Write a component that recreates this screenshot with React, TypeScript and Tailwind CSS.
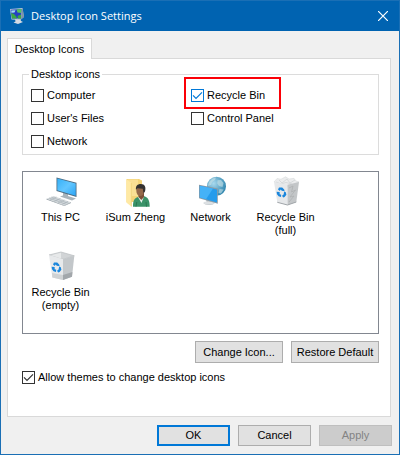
import type { ReactNode } from "react";
import clsx from "clsx";

type CheckProps = {
  label: string;
  checked?: boolean;
  hot?: boolean; // hovered look, blue outline and tick
};

function Check({ label, checked, hot }: CheckProps) {
  return (
    <label className="flex h-[13px] items-center gap-[3px] whitespace-nowrap">
      <span className={clsx("grid size-[13px] shrink-0", hot ? "text-[#0078d7]" : "text-[#333333]")}>
        <input
          type="checkbox"
          defaultChecked={checked}
          className="peer col-start-1 row-start-1 size-[13px] appearance-none border border-current bg-white"
        />
        <svg
          viewBox="0 0 13 13"
          className="pointer-events-none invisible col-start-1 row-start-1 size-[13px] peer-checked:visible"
          fill="none"
          stroke="currentColor"
          strokeWidth="1.2"
        >
          <path d="M2 6.3 L5 9.3 L11 3.3" />
        </svg>
      </span>
      {label}
    </label>
  );
}

function RecycleMark() {
  return (
    <g fill="#1a86dc">
      <path d="M9 11.6 L12.2 11.4 L14.2 13.6 L14.6 15.2 L11.8 14.8 L10.6 13.6 L9.8 15 L8 13.6Z" />
      <path d="M14.2 15.6 L15.8 16.2 L16.4 18.8 L14.6 21 L13.2 21.6 L12 19.8 L13.6 18.4Z" />
      <path d="M6.6 15.8 L9.4 16 L10 17.2 L9.2 18 L11.2 18.8 L11 21 L8.6 20.2 L7 18.2Z" />
    </g>
  );
}

function ThisPcIcon() {
  return (
    <svg viewBox="0 0 32 32" className="size-8">
      <defs>
        <linearGradient id="pc" x1="0" y1="0" x2="1" y2="1">
          <stop offset="0" stopColor="#35b0f7" />
          <stop offset=".5" stopColor="#62c6ff" />
          <stop offset="1" stopColor="#2ba4f4" />
        </linearGradient>
      </defs>
      <path d="M18 16 L23 17.5 L23 20 L31 22.5 L27 24.5 L15 20.5 L18 19.5Z" fill="#a9b4bb" />
      <path d="M11.5 1.5 L31.5 6.8 V21 L11.5 15Z" fill="#4c6a80" />
      <path d="M12.3 2.5 L30.7 7.4 V19.8 L12.3 14.3Z" fill="url(#pc)" />
      <path d="M1.5 22.7 L8.7 20 L26 26.3 L19.3 29.4Z" fill="#d5dadd" />
      <path d="M1.5 22.7 L19.3 29.4 L26 26.3 V27 L19.3 30 L1.5 23.5Z" fill="#8d989f" />
      <path d="M4 22 L21.5 28.4 M6.3 21.1 L23.7 27.4 M5 24 L11.5 21 M9 25.5 L15.5 22.5 M13 27 L19.5 24 M17 28.4 L23 25.4" stroke="#a5afb5" strokeWidth=".6" />
    </svg>
  );
}

function UserIcon() {
  return (
    <svg viewBox="0 0 32 32" className="size-8">
      <path d="M6.5 3 H19 L22 4.5 V26 H6.5Z" fill="#f4d478" />
      <path d="M8 3.5 H18 V20 H8Z" fill="#fae094" />
      <path d="M6.3 3 L11.7 7.3 V30.7 L6.3 26.5Z" fill="#ffe9a4" />
      <path d="M11.3 7 V30.5" stroke="#e8c868" strokeWidth=".6" />
      <path d="M13 30.7 C13 24 14.5 21.8 18.5 21 L23.5 20 C28 21 29.7 24 29.7 30.7Z" fill="#3a9268" />
      <path d="M18 21 L21.5 27 L24 20.5Z" fill="#e7f0ea" />
      <path d="M18.5 17 H24 V21 L21.3 24 L18.5 21Z" fill="#7b5138" />
      <ellipse cx="20.2" cy="14.8" rx="3.9" ry="5.2" fill="#94684a" />
      <path d="M16 14 C15.4 10 17.5 8 20.8 8 C25 8 26.2 11.3 25 15.5 L23.5 17.5 L22.8 12.7 L17.3 12.2Z" fill="#343130" />
      <path d="M16 30.7 L16.8 26 M26.5 30.7 L26 26" stroke="#216c45" strokeWidth=".7" />
    </svg>
  );
}

function NetworkIcon() {
  return (
    <svg viewBox="0 0 32 32" className="size-8">
      <defs>
        <radialGradient id="globe" cx=".35" cy=".35" r=".75">
          <stop offset="0" stopColor="#a8d9ee" />
          <stop offset="1" stopColor="#277fa9" />
        </radialGradient>
      </defs>
      <circle cx="21.5" cy="10.3" r="9.5" fill="url(#globe)" />
      <path d="M14 6 L17.5 2.6 L21 1.6 L20 4 L17 6 L16 9 L13 10Z M22.5 4.2 L26 4 L28.5 7 L27.5 11 L24 10 L22.3 7.5Z M24.5 13 L28.7 13.5 L26 17.5 L23.5 17Z" fill="#c9e3e8" opacity=".6" />
      <path d="M11 23 H16 V26 L19.5 27 C19.5 29.5 9 29.5 8.5 27 L11.5 26Z" fill="#bcc4c9" />
      <ellipse cx="14" cy="27" rx="5.6" ry="1.4" fill="#dce0e3" />
      <path d="M4 8.7 L22.8 12.5 V27.8 L4 22.3Z" fill="#8d9ba5" />
      <path d="M4.8 9.8 L22 13.4 V26.4 L4.8 21.4Z" fill="#259cec" />
      <path d="M4.8 9.8 L18 12.6 L11 23.2 L4.8 21.4Z" fill="#45b2f7" />
    </svg>
  );
}

function BinFullIcon() {
  return (
    <svg viewBox="0 0 32 32" className="size-8">
      <path d="M4 6 L7 2.5 L11 3.2 L15.5 .8 L19 3 L24 2.3 L26 5 L29 6 L17 11Z" fill="#ebeced" stroke="#d3d6d8" strokeWidth=".5" />
      <path d="M9 4 L12 7 L17 3 L20 7 L25 4 M6 6 L11 8 L16 6.5 L22 8" fill="none" stroke="#cdd1d3" strokeWidth=".7" />
      <path d="M4 6 L17.5 8.8 V29 L7.3 26.3Z" fill="#e6e8ea" />
      <path d="M17.5 8.8 L29 6 L26.3 26 L17.5 29Z" fill="#c3c6c8" />
      <path d="M19 12 L23 10 L21.5 16 L25.5 14 L20 21 L24 20 L19 26" fill="none" stroke="#aeb1b3" strokeWidth=".8" />
      <path d="M7.3 26.3 L17.5 29 L26.3 26" fill="none" stroke="#a0a5a9" />
      <RecycleMark />
    </svg>
  );
}

function BinEmptyIcon() {
  return (
    <svg viewBox="0 0 32 32" className="size-8">
      <path d="M4 4 L16 1 L29.3 4.8 L18 8.3Z" fill="#d1d4d6" stroke="#b9bdc0" strokeWidth=".7" />
      <path d="M6 4.3 L16 1.8 V7.4Z" fill="#e7e9ea" />
      <path d="M4 4 L18 8.3 V29 L7.3 26.5Z" fill="#e7e9eb" />
      <path d="M18 8.3 L29.3 4.8 L27 25.7 L18 29Z" fill="#c3c7ca" />
      <path d="M7 22 L18 24 V29 L7.3 26.5Z" fill="#cfd2d4" />
      <path d="M18 24 L27.4 21 L27 25.7 L18 29Z" fill="#a2a7ab" />
      <RecycleMark />
    </svg>
  );
}

function TitleIcon() {
  return (
    <svg viewBox="0 0 16 16" className="size-4">
      <path d="M6 11 L11 10 L12 13 L14 14 L9 16 L4.5 14.5 L6.5 13.5Z" fill="#d5dbe3" />
      <path d="M1 1 L13.5 0 L15 9 L11 12 L2.5 11.5Z" fill="#bac8d8" />
      <path d="M1.8 1.8 L12.6 1 L12 10.6 L3 10.4Z" fill="#2540c4" />
      <path d="M2 5 L5 6 L7.5 9 L8 10.5 L3 10.4Z" fill="#3ba944" />
      <path d="M7.5 1.5 L12.5 1 L12.2 5 L8.5 4.5Z" fill="#56c65a" />
      <path d="M8.5 8 L12 6.5 V10.5 H9Z" fill="#3ba944" />
      <path d="M2.2 2.5 L6.5 2.2 L5.5 4.5 L2.5 4.8Z" fill="#a2d8f2" />
      <path d="M13.5 0 L15 9 L12 11.5 L12.8 1Z" fill="#7c93a8" />
    </svg>
  );
}

const icons: { name: string; note?: string; icon: ReactNode }[] = [
  { name: "This PC", icon: <ThisPcIcon /> },
  { name: "iSum Zheng", icon: <UserIcon /> },
  { name: "Network", icon: <NetworkIcon /> },
  { name: "Recycle Bin", note: "(full)", icon: <BinFullIcon /> },
  { name: "Recycle Bin", note: "(empty)", icon: <BinEmptyIcon /> },
];

export default function App() {
  return (
    <main className="flex min-h-screen flex-col border border-[#1a6fb5] bg-[#f0f0f0] font-['Liberation_Sans',sans-serif] text-[11px] leading-[13px] text-black">
      <header className="flex h-[30px] items-center bg-[#0063b1] pr-[10px] pl-2 text-white">
        <TitleIcon />
        <h1 className="ml-[6px] flex-1 font-['Open_Sans','Noto_Sans',sans-serif] text-[11px] leading-4">
          Desktop Icon Settings
        </h1>
        <button type="button" aria-label="Close" className="p-px">
          <svg viewBox="0 0 10 10" className="size-[10px]" stroke="currentColor" strokeWidth="1.2">
            <path d="M0 0 L10 10 M10 0 L0 10" />
          </svg>
        </button>
      </header>

      <div className="flex flex-1 flex-col pt-[7px] pr-[7px] pl-[6px]">
        <div role="tablist" className="flex">
          <button
            type="button"
            role="tab"
            aria-selected="true"
            className="relative z-10 -mb-px h-[21px] w-[85px] border border-b-0 border-[#d9d9d9] bg-white"
          >
            Desktop Icons
          </button>
        </div>

        <section className="mr-px flex-1 border border-[#d9d9d9] bg-white pt-[9px] pr-[11px] pl-[14px]">
          <fieldset className="border border-[#dcdcdc] pr-[27px] pb-[6px] pl-2">
            <legend className="-ml-[2px] px-[2px]">Desktop icons</legend>
            <div className="grid grid-cols-2 gap-y-[10px] pt-[8px]">
              <Check label="Computer" />
              <div className="relative">
                <Check label="Recycle Bin" checked hot />
                <span className="pointer-events-none absolute -top-3 -left-[7px] h-8 w-[97px] border-2 border-[#fb0007]" />
              </div>
              <Check label="User's Files" />
              <Check label="Control Panel" />
              <Check label="Network" />
            </div>
          </fieldset>

          <ul className="mt-4 grid min-h-[163px] auto-rows-[75px] grid-cols-[repeat(auto-fill,75px)] border border-[#828790] pt-1">
            {icons.map((item) => (
              <li key={item.name + item.note} className="flex flex-col items-center text-center">
                {item.icon}
                <span className="mt-[3px]">{item.name}</span>
                {item.note && <span>{item.note}</span>}
              </li>
            ))}
          </ul>

          <div className="mt-[7px] mb-[8px] flex justify-end gap-2">
            <button type="button" className="h-[22px] w-[88px] border border-[#adadad] bg-[#e1e1e1]">
              Change Icon...
            </button>
            <button type="button" className="h-[22px] w-[88px] border border-[#adadad] bg-[#e1e1e1]">
              Restore Default
            </button>
          </div>

          <Check label="Allow themes to change desktop icons" checked />
        </section>

        <footer className="flex justify-end gap-2 pt-2 pb-[8px]">
          <button type="button" className="h-[21px] w-[73px] border-2 border-[#0078d7] bg-[#e1e1e1]">
            OK
          </button>
          <button type="button" className="h-[21px] w-[73px] border border-[#adadad] bg-[#e1e1e1]">
            Cancel
          </button>
          <button
            type="button"
            disabled
            className="h-[21px] w-[73px] border border-[#bfbfbf] bg-[#cccccc] text-[#838383]"
          >
            Apply
          </button>
        </footer>
      </div>
    </main>
  );
}
